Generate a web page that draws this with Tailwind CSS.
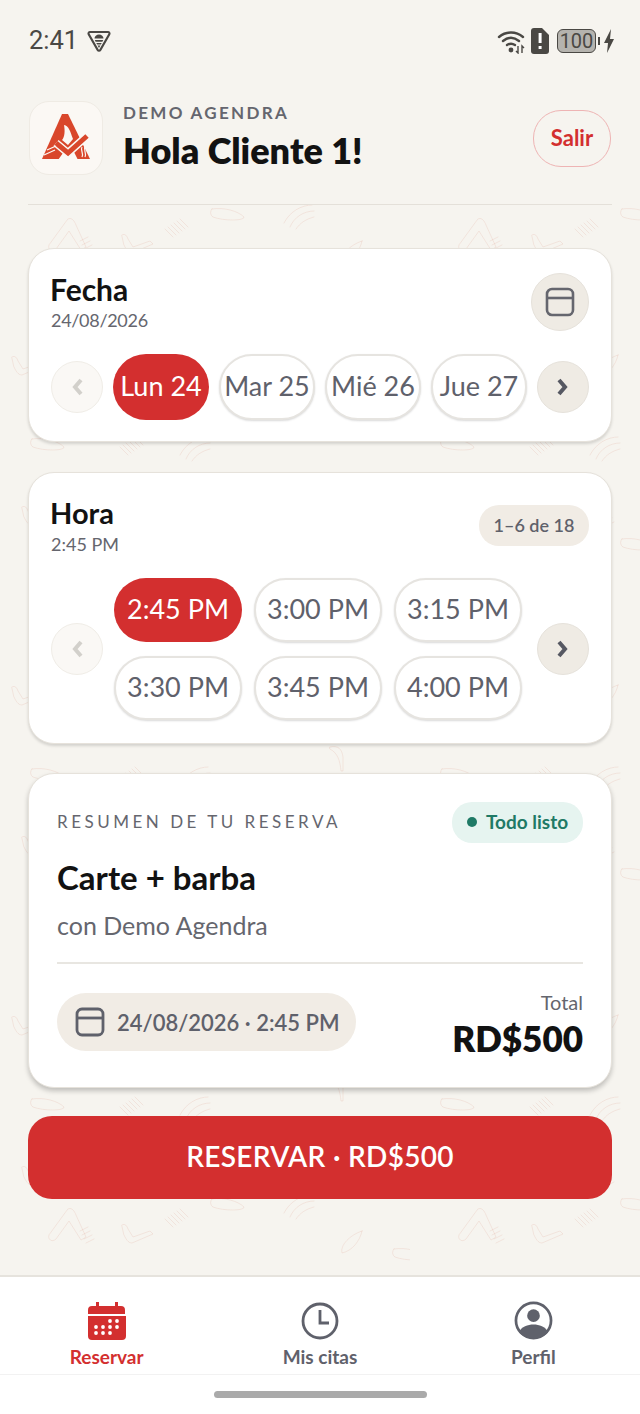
<!DOCTYPE html>
<html lang="es">
<head>
  <meta charset="UTF-8">
  <meta name="viewport" content="width=device-width, initial-scale=1.0">
  <title>Demo Agenda</title>
  <script src="https://cdn.jsdelivr.net/npm/@tailwindcss/browser@4"></script>
</head>
<body class="bg-[#f6f4ef] font-['Lato','Noto_Sans',sans-serif]">
<div class="relative w-[640px] h-[1414px] overflow-hidden flex flex-col">

  <!-- fondo decorativo -->
  <svg class="absolute left-0 top-[205px]" width="640" height="1071" fill="none">
    <defs>
      <path id="d-a" d="M20 2C23 0 26 3 28 8L38 30L33 33L21 14L8 32C4 36-1 32 1 28ZM32 24l8-4M34 28l8-4M36 32l8-4M38 36l8-4"/>
      <path id="d-chk" d="M2 2C5 0 7 3 8 6L13 14L30 8L33 11L12 20C8 20 6 16 4 12Z"/>
      <path id="d-hair" d="M18 0C28 0 36 6 36 14C30 12 26 18 30 26C34 32 36 38 30 38C22 36 18 24 14 22C8 26 6 18 4 16C2 8 8 2 18 0Z"/>
      <path id="d-leaf" d="M22 0C20 10 12 20 2 22C0 14 10 4 22 0Z"/>
      <path id="d-blade" d="M2 2C14 0 28 4 34 10C34 14 14 14 3 10C0 8 0 4 2 2Z"/>
      <path id="d-hook" d="M0 2C8 0 12 4 13 12L13 26L11 26C10 16 8 8 0 4Z"/>
      <path id="d-waves" d="M0 20C6 8 18 2 28 2M6 24C10 14 20 8 30 8M12 26C16 20 22 16 30 14"/>
      <path id="d-comb" d="M0 2l8 8M3 0l8 8M6-2l8 8M9-4l8 8M12-6l8 8M15-8l8 8"/>
      <pattern id="doodles" width="410" height="330" patternUnits="userSpaceOnUse">
        <g stroke="#cf6a55" stroke-opacity=".12" stroke-width="1" stroke-linecap="round" stroke-linejoin="round">
          <use href="#d-a" x="48" y="12"/>
          <use href="#d-chk" x="120" y="28"/>
          <use href="#d-blade" x="210" y="2"/>
          <use href="#d-comb" x="165" y="22"/>
          <use href="#d-waves" x="284" y="-2"/>
          <use href="#d-blade" x="392" y="52"/>
          <use href="#d-leaf" x="340" y="36"/>
          <use href="#d-hair" x="88" y="95"/>
          <use href="#d-hook" x="245" y="92"/>
          <use href="#d-waves" x="312" y="120"/>
          <use href="#d-chk" x="10" y="150"/>
          <use href="#d-leaf" x="186" y="150"/>
          <use href="#d-a" x="260" y="170"/>
          <use href="#d-hair" x="360" y="165"/>
          <use href="#d-hook" x="330" y="210"/>
          <use href="#d-blade" x="30" y="232"/>
          <use href="#d-comb" x="120" y="240"/>
          <use href="#d-waves" x="180" y="230"/>
          <use href="#d-hair" x="75" y="268"/>
          <use href="#d-chk" x="20" y="300"/>
          <use href="#d-a" x="158" y="285"/>
          <use href="#d-leaf" x="108" y="310"/>
          <use href="#d-blade" x="240" y="299"/>
          <use href="#d-hook" x="295" y="300"/>
          <use href="#d-chk" x="340" y="290"/>
        </g>
      </pattern>
    </defs>
    <rect width="640" height="1071" fill="url(#doodles)"/>
  </svg>

  <!-- barra de estado -->
  <div class="relative h-[82px] shrink-0 pl-[29px] pr-[26px] flex items-center justify-between text-[#4a4844]">
    <div class="flex items-center gap-[9px]">
      <span class="font-['Roboto',sans-serif] text-[25.5px] leading-none">2:41</span>
      <svg width="24" height="24" viewBox="0 0 24 24" fill="none">
        <path d="M3 3h18a1.500 1.500 0 0 1 1.300 2.200L13.300 21a1.500 1.500 0 0 1-2.600 0L1.700 5.200A1.500 1.500 0 0 1 3 3z" stroke="#4a4844" stroke-width="2.200" stroke-linejoin="round"/>
        <path d="M7.500 9.500a4.500 4 0 0 1 9 0zM7.800 11h8.400l-.8 1.800H8.600zM9.300 14h5.400l-.8 1.600h-3.800zM10.600 16.600h2.800L12 19z" fill="#4a4844"/>
      </svg>
    </div>
    <div class="flex items-center">
      <svg width="30" height="26" viewBox="0 0 30 26" fill="none" class="mr-[4px]">
        <path d="M2 9c7-6 17-6 24 0M6 13c5-4 11-4 16 0M10 17c3-2 5-2 8 0" stroke="#4a4844" stroke-width="2.400" stroke-linecap="round"/>
        <circle cx="14" cy="22" r="2.400" fill="#4a4844"/>
        <path d="M21 18v7l-2-2M25 25v-7l2 2" stroke="#4a4844" stroke-width="1.400"/>
      </svg>
      <svg width="18" height="26" viewBox="0 0 18 26" class="mr-[8px]">
        <path d="M3 0h8l7 7v16a3 3 0 0 1-3 3H3a3 3 0 0 1-3-3V3a3 3 0 0 1 3-3z" fill="#4a4844"/>
        <rect x="7.600" y="5" width="3" height="10" fill="#fff"/>
        <rect x="7.600" y="18" width="3" height="3" fill="#fff"/>
      </svg>
      <div class="w-[39px] h-[24px] rounded-[6px] border-[1.500px] border-[#4a4844] bg-[#b5b3ae] flex items-center justify-center font-['Roboto',sans-serif] text-[20px] leading-none">100</div>
      <div class="w-[2px] h-[8px] bg-[#4a4844] ml-[2px] mr-[4px]"></div>
      <svg width="10" height="24" viewBox="0 0 10 24"><path d="M7 0L0 14h4l-1 10 7-14H6z" fill="#4a4844"/></svg>
    </div>
  </div>

  <!-- cabecera -->
  <div class="relative mx-[28px] h-[123px] pt-[19px] border-b border-[#e4e0d9] flex items-start">
    <div class="ml-px w-[74px] h-[74px] rounded-[20px] bg-[#fbf8f4] border border-[#efebe4] flex items-center justify-center">
      <svg width="50" height="50" viewBox="0 0 50 50">
        <path d="M21 1h6L49 46H1z" fill="#d9472b"/>
        <path d="M23 12C28 13 29 18 32 26L27 32L21 27C24 24 24 17 23 12z" fill="#fbf8f4"/>
        <path d="M17 47L22 40L27 44L33 39L37 47z" fill="#fbf8f4"/>
        <path d="M15 30L27 40L46 23" fill="none" stroke="#fbf8f4" stroke-width="8"/>
        <path d="M15 30L27 40L46 23" fill="none" stroke="#d9472b" stroke-width="5"/>
        <path d="M3 42L14 37M6 37L15 33" stroke="#fbf8f4" stroke-width="1.300"/>
        <path d="M41 34C39 37 43 40 41 44M44 33C42 37 46 40 44 44" stroke="#fbf8f4" stroke-width="1.200" fill="none"/>
      </svg>
    </div>
    <div class="ml-[20px] mt-[2px]">
      <div class="text-[17px] leading-[20px] font-bold tracking-[2.300px] text-[#65666e]">DEMO AGENDRA</div>
      <div class="mt-[7px] text-[36px] leading-[40px] font-extrabold text-[#121212]">Hola Cliente 1!</div>
    </div>
    <div class="ml-auto mr-px mt-[9px] w-[78px] h-[57px] pb-[3px] rounded-[28px] border border-[#eeb4b4] flex items-center justify-center text-[22px] font-bold text-[#d32f2f]">Salir</div>
  </div>

  <div class="relative px-[28px] pt-[43px] flex flex-col">
    <!-- fecha -->
    <section class="h-[194px] rounded-[26px] bg-white border border-[#e6e2db] shadow-[0_2px_3px_rgba(0,0,0,0.14)] px-[22px] pt-[23px]">
      <div class="flex items-start justify-between h-[82px]">
        <div>
          <div class="-ml-px text-[30px] leading-[34px] font-bold text-[#121212]">Fecha</div>
          <div class="mt-[2px] text-[18px] leading-[24px] tracking-[-0.300px] text-[#65666e]">24/08/2026</div>
        </div>
        <div class="mt-px w-[58px] h-[58px] rounded-full bg-[#efebe4] border border-[#e6e2db] flex items-center justify-center">
          <svg width="30" height="30" viewBox="0 0 30 30" fill="none" stroke="#65666e" stroke-width="2.600"><rect x="2" y="2" width="26" height="26" rx="5"/><path d="M2 11h26"/></svg>
        </div>
      </div>
      <div class="flex items-center">
        <div class="w-[52px] h-[52px] rounded-full bg-[#faf8f5] border border-[#f0ede7] flex items-center justify-center">
          <svg width="12" height="20" viewBox="0 0 12 20" fill="none" stroke="#d2d0cb" stroke-width="4"><path d="M10 3L4 10l6 7"/></svg>
        </div>
        <div class="ml-[10px] flex gap-[10px]">
          <div class="w-[96px] h-[66px] pb-[2px] rounded-[33px] bg-[#d32f2f] flex items-center justify-center text-[27px] text-white">Lun 24</div>
          <div class="w-[96px] h-[66px] pb-[2px] rounded-[33px] bg-white border-2 border-[#e6e4e0] shadow-[0_1px_2px_rgba(0,0,0,0.15)] flex items-center justify-center text-[27px] text-[#5f616b]">Mar 25</div>
          <div class="w-[96px] h-[66px] pb-[2px] rounded-[33px] bg-white border-2 border-[#e6e4e0] shadow-[0_1px_2px_rgba(0,0,0,0.15)] flex items-center justify-center text-[27px] text-[#5f616b]">Mié 26</div>
          <div class="w-[96px] h-[66px] pb-[2px] rounded-[33px] bg-white border-2 border-[#e6e4e0] shadow-[0_1px_2px_rgba(0,0,0,0.15)] flex items-center justify-center text-[27px] text-[#5f616b]">Jue 27</div>
        </div>
        <div class="ml-auto w-[52px] h-[52px] rounded-full bg-[#efebe4] border border-[#e6e2db] flex items-center justify-center">
          <svg width="12" height="20" viewBox="0 0 12 20" fill="none" stroke="#565862" stroke-width="4"><path d="M2 3l6 7-6 7"/></svg>
        </div>
      </div>
    </section>

    <!-- hora -->
    <section class="mt-[30px] h-[272px] rounded-[26px] bg-white border border-[#e6e2db] shadow-[0_2px_3px_rgba(0,0,0,0.14)] px-[22px] pt-[23px]">
      <div class="flex items-start justify-between h-[82px]">
        <div>
          <div class="-ml-px text-[29px] leading-[34px] font-bold text-[#121212]">Hora</div>
          <div class="mt-[2px] text-[18px] leading-[24px] text-[#65666e]">2:45 PM</div>
        </div>
        <div class="mt-[9px] w-[110px] h-[41px] rounded-[20px] bg-[#f1ece5] flex items-center justify-center text-[18px] font-semibold text-[#5f616b]">1–6 de 18</div>
      </div>
      <div class="flex items-center">
        <div class="w-[52px] h-[52px] rounded-full bg-[#faf8f5] border border-[#f0ede7] flex items-center justify-center">
          <svg width="12" height="20" viewBox="0 0 12 20" fill="none" stroke="#d2d0cb" stroke-width="4"><path d="M10 3L4 10l6 7"/></svg>
        </div>
        <div class="ml-[11px] grid grid-cols-[128px_128px_128px] gap-x-[12px] gap-y-[14px]">
          <div class="h-[64px] pb-[2px] rounded-[32px] bg-[#d32f2f] flex items-center justify-center text-[27px] text-white">2:45 PM</div>
          <div class="h-[64px] pb-[2px] rounded-[32px] bg-white border-2 border-[#e6e4e0] shadow-[0_1px_2px_rgba(0,0,0,0.15)] flex items-center justify-center text-[27px] text-[#5f616b]">3:00 PM</div>
          <div class="h-[64px] pb-[2px] rounded-[32px] bg-white border-2 border-[#e6e4e0] shadow-[0_1px_2px_rgba(0,0,0,0.15)] flex items-center justify-center text-[27px] text-[#5f616b]">3:15 PM</div>
          <div class="h-[64px] pb-[2px] rounded-[32px] bg-white border-2 border-[#e6e4e0] shadow-[0_1px_2px_rgba(0,0,0,0.15)] flex items-center justify-center text-[27px] text-[#5f616b]">3:30 PM</div>
          <div class="h-[64px] pb-[2px] rounded-[32px] bg-white border-2 border-[#e6e4e0] shadow-[0_1px_2px_rgba(0,0,0,0.15)] flex items-center justify-center text-[27px] text-[#5f616b]">3:45 PM</div>
          <div class="h-[64px] pb-[2px] rounded-[32px] bg-white border-2 border-[#e6e4e0] shadow-[0_1px_2px_rgba(0,0,0,0.15)] flex items-center justify-center text-[27px] text-[#5f616b]">4:00 PM</div>
        </div>
        <div class="ml-auto w-[52px] h-[52px] rounded-full bg-[#efebe4] border border-[#e6e2db] flex items-center justify-center">
          <svg width="12" height="20" viewBox="0 0 12 20" fill="none" stroke="#565862" stroke-width="4"><path d="M2 3l6 7-6 7"/></svg>
        </div>
      </div>
    </section>

    <!-- resumen -->
    <section class="mt-[29px] h-[315px] rounded-[26px] bg-white border border-[#e6e2db] shadow-[0_3px_5px_rgba(0,0,0,0.22)] px-[28px] pt-[27px]">
      <div class="flex items-center justify-between h-[42px]">
        <span class="text-[17px] tracking-[3.500px] text-[#65666e]">RESUMEN DE TU RESERVA</span>
        <span class="w-[131px] h-[41px] rounded-[20px] bg-[#e6f4f0] flex items-center justify-center gap-[9px] text-[19px] font-bold text-[#1f7a66]">
          <span class="w-[10px] h-[10px] rounded-full bg-[#1f7a66]"></span>Todo listo
        </span>
      </div>
      <div class="mt-[12px] text-[33px] leading-[44px] font-bold text-[#121212]">Carte + barba</div>
      <div class="mt-[10px] text-[25px] leading-[32px] text-[#65666e]">con Demo Agendra</div>
      <div class="mt-[21px] border-t-2 border-[#e8e6e1]"></div>
      <div class="mt-[18px] flex items-start justify-between">
        <div class="mt-[11px] w-[299px] h-[58px] rounded-[29px] bg-[#f1ece5] flex items-center pl-[18px] gap-[12px]">
          <svg width="30" height="30" viewBox="0 0 30 30" fill="none" stroke="#5f616b" stroke-width="2.800"><rect x="2" y="2" width="26" height="26" rx="5"/><path d="M2 11h26"/></svg>
          <span class="text-[22px] font-semibold text-[#5f616b]">24/08/2026 · 2:45 PM</span>
        </div>
        <div class="mt-[7px] text-right">
          <div class="text-[20px] leading-[26px] text-[#65666e]">Total</div>
          <div class="mt-[1px] text-[35px] leading-[44px] font-extrabold text-[#121212]">RD$500</div>
        </div>
      </div>
    </section>

    <button class="mt-[28px] h-[83px] pb-[4px] rounded-[24px] bg-[#d32f2f] text-white text-[28px] font-semibold tracking-[0.300px]">RESERVAR · RD$500</button>
  </div>

  <!-- navegacion -->
  <nav class="absolute left-0 right-0 bottom-0 h-[139px] bg-white border-t-2 border-[#e6e3dd]">
    <div class="h-[98px] grid grid-cols-3 border-b border-[#f2f2f2] text-[19px] font-bold text-[#5f616b]">
      <div class="flex flex-col items-center pt-[25px] text-[#d32f2f]">
        <svg width="38" height="38" viewBox="0 0 38 38">
          <path d="M8 0h3v4h16V0h3v4h3a4 4 0 0 1 4 4v4H0V8a4 4 0 0 1 4-4h4zM0 14h38v20a4 4 0 0 1-4 4H4a4 4 0 0 1-4-4z" fill="#d32f2f"/>
          <g fill="#fff"><circle cx="22" cy="19" r="1.900"/><circle cx="29" cy="19" r="1.900"/><circle cx="8" cy="25" r="1.900"/><circle cx="15" cy="25" r="1.900"/><circle cx="22" cy="25" r="1.900"/><circle cx="29" cy="25" r="1.900"/><circle cx="8" cy="31" r="1.900"/><circle cx="15" cy="31" r="1.900"/><circle cx="22" cy="31" r="1.900"/></g>
        </svg>
        <span class="mt-[6px] leading-[22px]">Reservar</span>
      </div>
      <div class="flex flex-col items-center pt-[25px]">
        <svg width="38" height="38" viewBox="0 0 38 38" fill="none" stroke="#5f616b" stroke-width="2.800"><circle cx="19" cy="19" r="17"/><path d="M19 8v13h9"/></svg>
        <span class="mt-[6px] leading-[22px]">Mis citas</span>
      </div>
      <div class="flex flex-col items-center pt-[24px]">
        <svg width="39" height="39" viewBox="0 0 40 40" fill="none"><circle cx="20" cy="20" r="18" stroke="#5f616b" stroke-width="2.800"/><circle cx="20" cy="15" r="6.500" fill="#5f616b"/><path d="M5 32c3-6 9-8 15-8s12 2 15 8c-4 4-9 6.500-15 6.500S9 36 5 32z" fill="#5f616b"/></svg>
        <span class="mt-[6px] leading-[22px]">Perfil</span>
      </div>
    </div>
    <div class="mt-[16px] mx-auto w-[213px] h-[7px] rounded-full bg-[#aaaaaa]"></div>
  </nav>
</div>
</body>
</html>
